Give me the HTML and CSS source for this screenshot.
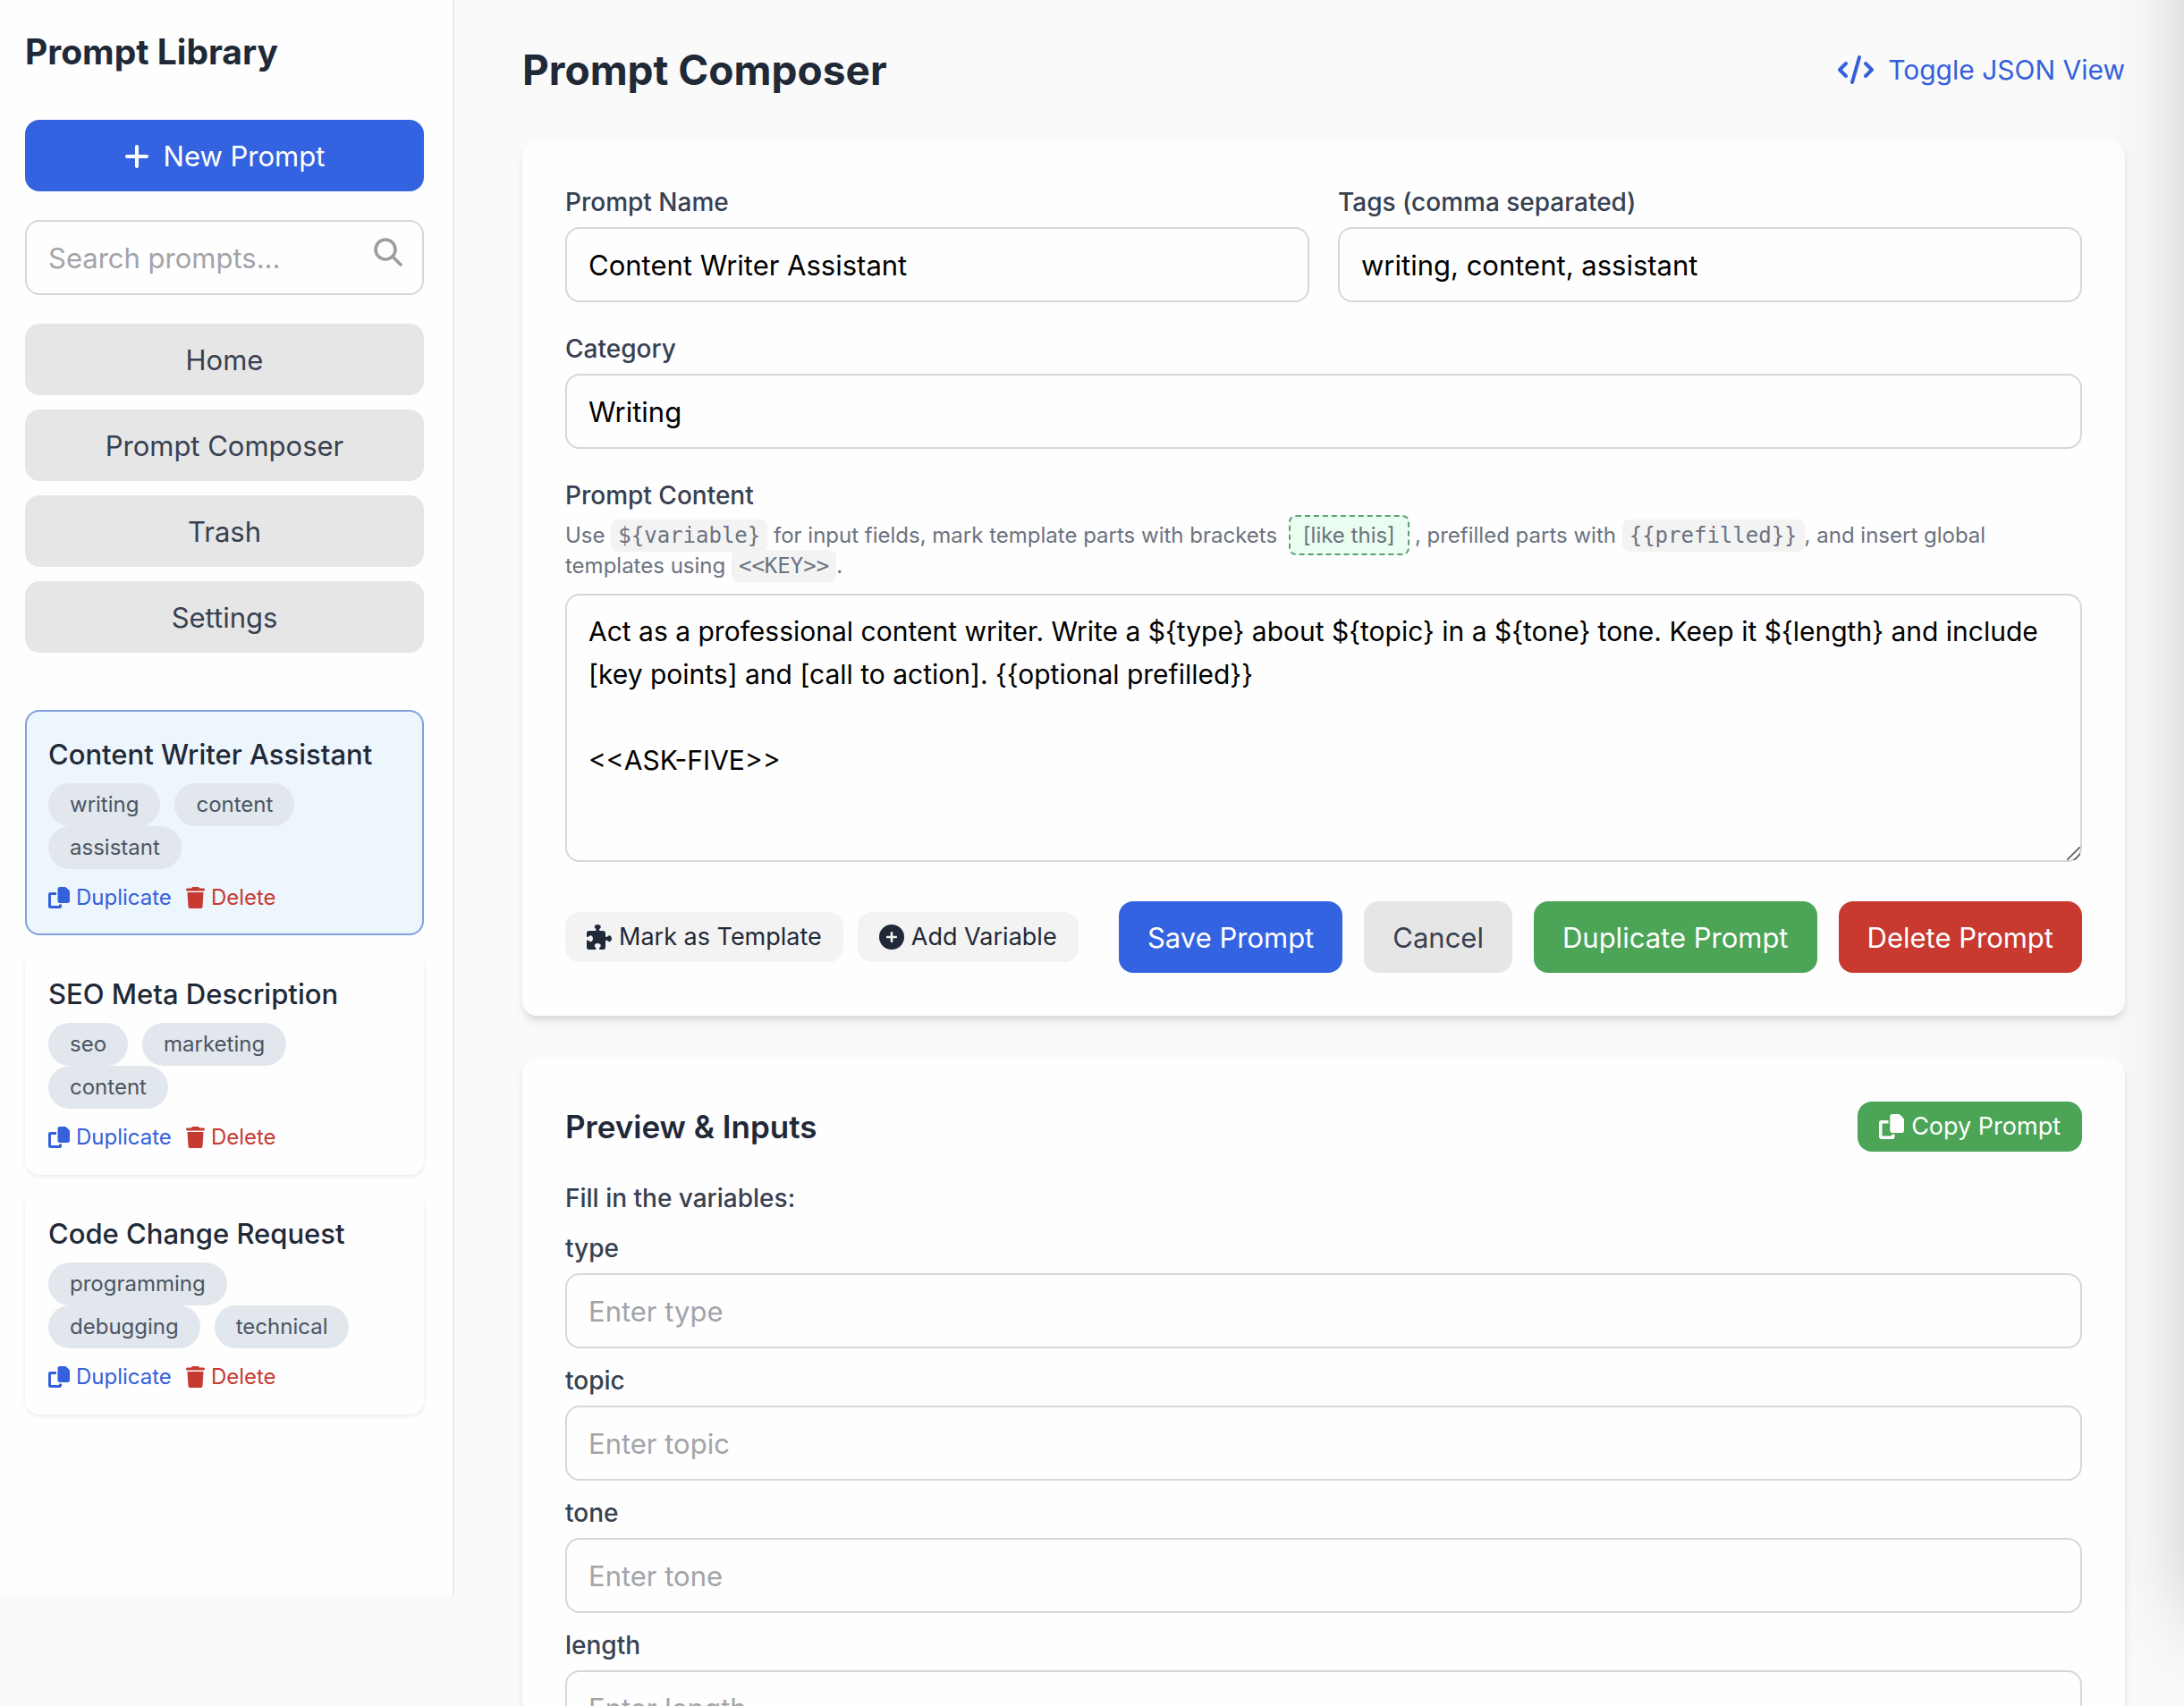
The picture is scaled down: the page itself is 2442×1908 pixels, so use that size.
FILE: index.html
```html
<!DOCTYPE html>
<html lang="en">
<head>
<meta charset="utf-8">
<title>Prompt Composer</title>
<link rel="stylesheet" href="styles.css">
</head>
<body>
<svg class="sprite" aria-hidden="true">
  <symbol id="i-plus" viewBox="0 0 448 512"><path d="M256 80c0-17.7-14.3-32-32-32s-32 14.3-32 32V224H48c-17.7 0-32 14.3-32 32s14.3 32 32 32H192V432c0 17.7 14.3 32 32 32s32-14.3 32-32V288H400c17.7 0 32-14.3 32-32s-14.3-32-32-32H256V80z"/></symbol>
  <symbol id="i-search" viewBox="0 0 32 32"><path d="M13 2a11 11 0 1 0 0 22a11 11 0 1 0 0-22zM21 21L30 30" fill="none" stroke="currentColor" stroke-width="3.600" stroke-linecap="round"/></symbol>
  <symbol id="i-copy" viewBox="0 0 512 512"><path d="M272 0H396.1c12.7 0 24.9 5.1 33.9 14.1l67.9 67.9c9 9 14.1 21.2 14.1 33.9V336c0 26.5-21.5 48-48 48H272c-26.5 0-48-21.5-48-48V48c0-26.5 21.5-48 48-48zM48 128H192v64H64V448H256V416h64v48c0 26.5-21.5 48-48 48H48c-26.5 0-48-21.5-48-48V176c0-26.5 21.5-48 48-48z"/></symbol>
  <symbol id="i-trash" viewBox="0 0 448 512"><path d="M135.2 17.7L128 32H32C14.3 32 0 46.3 0 64S14.3 96 32 96H416c17.7 0 32-14.3 32-32s-14.3-32-32-32H320l-7.2-14.3C307.4 6.8 296.3 0 284.2 0H163.8c-12.1 0-23.2 6.8-28.6 17.7zM416 128H32L53.2 467c1.6 25.3 22.6 45 47.9 45H346.9c25.3 0 46.3-19.7 47.9-45L416 128z"/></symbol>
  <symbol id="i-code" viewBox="0 0 640 512"><path d="M392.8 1.2c-17-4.9-34.7 5-39.6 22l-128 448c-4.9 17 5 34.7 22 39.6s34.7-5 39.6-22l128-448c4.9-17-5-34.7-22-39.6zm80.6 120.1c-12.5 12.5-12.5 32.8 0 45.3L562.7 256l-89.4 89.4c-12.5 12.5-12.5 32.8 0 45.3s32.8 12.5 45.3 0l112-112c12.5-12.5 12.5-32.8 0-45.3l-112-112c-12.5-12.5-32.8-12.5-45.3 0zm-306.7 0c-12.5-12.5-32.8-12.5-45.3 0l-112 112c-12.5 12.5-12.5 32.8 0 45.3l112 112c12.5 12.5 32.8 12.5 45.3 0s12.5-32.8 0-45.3L77.3 256l89.4-89.4c12.5-12.5 12.5-32.8 0-45.3z"/></symbol>
  <symbol id="i-circle-plus" viewBox="0 0 512 512"><path d="M256 512A256 256 0 1 0 256 0a256 256 0 1 0 0 512zM232 344V280H168c-13.3 0-24-10.7-24-24s10.7-24 24-24h64V168c0-13.3 10.7-24 24-24s24 10.7 24 24v64h64c13.3 0 24 10.7 24 24s-10.7 24-24 24H280v64c0 13.3-10.7 24-24 24s-24-10.7-24-24z"/></symbol>
  <symbol id="i-puzzle" viewBox="0 0 512 512"><path d="M192 104.8c0-9.2-5.8-17.3-13.2-22.8C167.2 73.3 160 61.3 160 48c0-26.5 28.7-48 64-48s64 21.5 64 48c0 13.3-7.2 25.3-18.8 34c-7.4 5.5-13.2 13.6-13.2 22.8c0 12.8 10.4 23.2 23.2 23.2H336c26.5 0 48 21.5 48 48v56.8c0 12.8 10.4 23.2 23.2 23.2c9.2 0 17.3-5.8 22.8-13.2c8.7-11.6 20.7-18.8 34-18.8c26.5 0 48 28.7 48 64s-21.5 64-48 64c-13.3 0-25.3-7.2-34-18.8c-5.5-7.4-13.6-13.2-22.8-13.2c-12.8 0-23.2 10.4-23.2 23.2V464c0 26.5-21.5 48-48 48H279.2c-12.8 0-23.2-10.4-23.2-23.2c0-9.2 5.8-17.3 13.2-22.8c11.6-8.7 18.8-20.7 18.8-34c0-26.5-28.7-48-64-48s-64 21.5-64 48c0 13.3 7.2 25.3 18.8 34c7.4 5.5 13.2 13.6 13.2 22.8c0 12.8-10.4 23.2-23.2 23.2H48c-26.5 0-48-21.5-48-48V343.2C0 330.4 10.4 320 23.2 320c9.2 0 17.3 5.8 22.8 13.2C54.7 344.8 66.7 352 80 352c26.5 0 48-28.7 48-64s-21.5-64-48-64c-13.3 0-25.3 7.2-34 18.8C40.5 250.2 32.4 256 23.2 256C10.4 256 0 245.6 0 232.8V176c0-26.5 21.5-48 48-48H168.8c12.8 0 23.2-10.4 23.2-23.2z"/></symbol>
</svg>

<div class="layout">
  <aside class="sidebar">
    <h2 class="sidebar-title">Prompt Library</h2>
    <button type="button" class="btn btn-primary btn-new"><svg class="icon icon-plus"><use href="#i-plus"/></svg>New Prompt</button>
    <div class="search">
      <input type="text" class="field" placeholder="Search prompts..." aria-label="Search prompts">
      <svg class="icon icon-search"><use href="#i-search"/></svg>
    </div>
    <nav class="nav">
      <button type="button" class="btn btn-gray">Home</button>
      <button type="button" class="btn btn-gray">Prompt Composer</button>
      <button type="button" class="btn btn-gray">Trash</button>
      <button type="button" class="btn btn-gray">Settings</button>
    </nav>
    <div class="prompt-list">
      <article class="prompt-item active">
        <h3 class="prompt-name">Content Writer Assistant</h3>
        <div class="tags"><span class="tag">writing</span><span class="tag">content</span><span class="tag">assistant</span></div>
        <div class="item-actions">
          <button type="button" class="link-btn blue"><svg class="icon icon-copy"><use href="#i-copy"/></svg>Duplicate</button>
          <button type="button" class="link-btn red"><svg class="icon icon-trash"><use href="#i-trash"/></svg>Delete</button>
        </div>
      </article>
      <article class="prompt-item">
        <h3 class="prompt-name">SEO Meta Description</h3>
        <div class="tags"><span class="tag">seo</span><span class="tag">marketing</span><span class="tag">content</span></div>
        <div class="item-actions">
          <button type="button" class="link-btn blue"><svg class="icon icon-copy"><use href="#i-copy"/></svg>Duplicate</button>
          <button type="button" class="link-btn red"><svg class="icon icon-trash"><use href="#i-trash"/></svg>Delete</button>
        </div>
      </article>
      <article class="prompt-item">
        <h3 class="prompt-name">Code Change Request</h3>
        <div class="tags"><span class="tag">programming</span><span class="tag">debugging</span><span class="tag">technical</span></div>
        <div class="item-actions">
          <button type="button" class="link-btn blue"><svg class="icon icon-copy"><use href="#i-copy"/></svg>Duplicate</button>
          <button type="button" class="link-btn red"><svg class="icon icon-trash"><use href="#i-trash"/></svg>Delete</button>
        </div>
      </article>
    </div>
  </aside>

  <main class="main">
    <header class="page-header">
      <h1 class="page-title">Prompt Composer</h1>
      <button type="button" class="json-toggle"><svg class="icon icon-code"><use href="#i-code"/></svg>Toggle JSON View</button>
    </header>

    <form class="card composer">
      <div class="form-grid">
        <div class="form-group">
          <label class="label" for="name">Prompt Name</label>
          <input class="field" id="name" type="text" value="Content Writer Assistant">
        </div>
        <div class="form-group">
          <label class="label" for="tags">Tags (comma separated)</label>
          <input class="field" id="tags" type="text" value="writing, content, assistant">
        </div>
      </div>
      <div class="form-group">
        <label class="label" for="category">Category</label>
        <input class="field" id="category" type="text" value="Writing">
      </div>
      <div class="content-group">
        <label class="label" for="content">Prompt Content</label>
        <p class="help">Use <code class="chip">${variable}</code> for input fields, mark template parts with brackets <span class="template-part">[like this]</span>, prefilled parts with <code class="chip">{{prefilled}}</code>, and insert global templates using <code class="chip">&lt;&lt;KEY&gt;&gt;</code>.</p>
        <textarea class="field content-area" id="content">Act as a professional content writer. Write a ${type} about ${topic} in a ${tone} tone. Keep it ${length} and include [key points] and [call to action]. {{optional prefilled}}

&lt;&lt;ASK-FIVE&gt;&gt;</textarea>
      </div>
      <div class="toolbar">
        <div class="tools">
          <button type="button" class="btn-small btn-light"><svg class="icon icon-small"><use href="#i-puzzle"/></svg>Mark as Template</button>
          <button type="button" class="btn-small btn-light"><svg class="icon icon-small"><use href="#i-circle-plus"/></svg>Add Variable</button>
        </div>
        <div class="actions">
          <button type="button" class="btn btn-primary">Save Prompt</button>
          <button type="button" class="btn btn-gray">Cancel</button>
          <button type="button" class="btn btn-green">Duplicate Prompt</button>
          <button type="button" class="btn btn-red">Delete Prompt</button>
        </div>
      </div>
    </form>

    <section class="card preview">
      <div class="preview-header">
        <h2 class="preview-title">Preview &amp; Inputs</h2>
        <button type="button" class="btn-small btn-green"><svg class="icon icon-small"><use href="#i-copy"/></svg>Copy Prompt</button>
      </div>
      <h3 class="label preview-hint">Fill in the variables:</h3>
      <div class="variables">
        <div class="form-group"><label class="label" for="v-type">type</label><input class="field" id="v-type" type="text" placeholder="Enter type"></div>
        <div class="form-group"><label class="label" for="v-topic">topic</label><input class="field" id="v-topic" type="text" placeholder="Enter topic"></div>
        <div class="form-group"><label class="label" for="v-tone">tone</label><input class="field" id="v-tone" type="text" placeholder="Enter tone"></div>
        <div class="form-group"><label class="label" for="v-length">length</label><input class="field" id="v-length" type="text" placeholder="Enter length"></div>
      </div>
    </section>
  </main>
</div>
<div class="drawer" aria-hidden="true"></div>
</body>
</html>
```
FILE: styles.css
```css
* { box-sizing: border-box; margin: 0; }

body {
  height: 100vh;
  overflow: hidden;
  background: #fafafa;
  color: #1f2937;
  font-family: Inter, "Liberation Sans", sans-serif;
  font-size: 31px;
  line-height: 48px;
}

button, input, textarea { font: inherit; color: inherit; }
button { border: 0; padding: 0; background: none; cursor: pointer; white-space: nowrap; }

.sprite { display: none; }
.icon { flex: none; fill: currentColor; }
.icon-plus { width: 28px; height: 32px; }
.icon-code { width: 40px; height: 32px; }
.icon-copy { width: 24px; height: 24px; }
.icon-trash { width: 21px; height: 24px; }
.icon-small { width: 28px; height: 28px; }

.layout { display: flex; align-items: flex-start; }

/* Sidebar */
.sidebar {
  flex: none;
  width: 508px;
  min-height: calc(100vh - 124px);
  padding: 30px 32px 32px 28px;
  background: #fefefe;
  border-right: 2px solid #e9e9ea;
}
.sidebar-title { margin-bottom: 48px; font-size: 39px; line-height: 56px; font-weight: 700; }
.search { position: relative; margin: 32px 0; }
.icon-search { position: absolute; right: 24px; top: 20px; width: 32px; height: 32px; color: #9b9da1; }
.nav { display: flex; flex-direction: column; gap: 16px; margin-bottom: 64px; }
.prompt-list { display: flex; flex-direction: column; gap: 16px; }
.prompt-item {
  padding: 24px;
  border: 2px solid transparent;
  border-radius: 16px;
  background: #fefefe;
  box-shadow: 0 2px 4px rgba(0, 0, 0, 0.08);
}
.prompt-item.active { background: #edf5fd; border-color: #7f9fdd; box-shadow: none; }
.prompt-name { margin-bottom: 8px; font-size: 31px; line-height: 48px; font-weight: 500; }
.tags { display: flex; flex-wrap: wrap; }
.tag {
  margin-right: 16px;
  padding: 8px 24px;
  border-radius: 24px;
  background: #e1e7ec;
  color: #4b5563;
  font-size: 24px;
  line-height: 32px;
}
.item-actions { display: flex; gap: 16px; margin-top: 16px; }
.link-btn { display: flex; align-items: center; gap: 7px; font-size: 24px; line-height: 32px; }
.blue { color: #3460dc; }
.red { color: #c63a31; }

/* Buttons */
.btn {
  display: flex;
  align-items: center;
  justify-content: center;
  gap: 16px;
  padding: 17px 32px 15px;
  border-radius: 16px;
}
.btn-new { width: 100%; }
.btn-primary { background: #3463e1; color: #fff; }
.btn-gray { background: #e6e6e7; color: #374151; }
.btn-green { background: #4ca456; color: #fff; }
.btn-red { background: #c8392f; color: #fff; }
.btn-small {
  display: flex;
  align-items: center;
  gap: 8px;
  padding: 8px 24px;
  border-radius: 16px;
  font-size: 27px;
  line-height: 40px;
}
.btn-light { background: #f3f3f4; color: #1f2937; }

/* Main column */
.main { flex: 1; min-width: 0; padding: 46px 66px 48px 76px; }
.page-header { display: flex; align-items: center; justify-content: space-between; margin-bottom: 48px; }
.page-title { font-size: 46px; line-height: 64px; font-weight: 700; }
.json-toggle { display: flex; align-items: center; gap: 16px; color: #3460dc; font-size: 30px; }

.card {
  margin-bottom: 48px;
  padding: 48px;
  border-radius: 16px;
  background: #fefefe;
  box-shadow: 0 8px 12px -2px rgba(0, 0, 0, 0.1), 0 4px 8px -4px rgba(0, 0, 0, 0.1);
}
.composer { display: flex; flex-direction: column; gap: 32px; }
.form-grid { display: grid; grid-template-columns: 1fr 1fr; gap: 32px; }
.form-group { display: flex; flex-direction: column; gap: 8px; }
.label { display: block; color: #374151; font-size: 28px; line-height: 40px; font-weight: 500; }
.field {
  display: block;
  width: 100%;
  padding: 16px 24px;
  border: 2px solid #d6d7d9;
  border-radius: 16px;
  background: #fefefe;
  color: #000;
  font-size: 31px;
  line-height: 48px;
  outline: none;
}
input.field { height: 84px; }
.field::placeholder { color: #a2a4a9; opacity: 1; }
.content-area { height: 300px; font-size: 30px; resize: vertical; }
.content-area::-webkit-resizer {
  background:
    linear-gradient(135deg,
      transparent 46%, #77797d 46%, #77797d 54%, transparent 54%,
      transparent 73%, #77797d 73%, #77797d 81%, transparent 81%);
}

.help { margin: 8px 0 14px; color: #6b7280; font-size: 24px; line-height: 33px; }
.chip {
  padding: 4px 8px;
  border-radius: 8px;
  background: #f3f3f4;
  font-family: "DejaVu Sans Mono", monospace;
  font-size: 24px;
}
.template-part {
  margin: 0 6px;
  padding: 6px 14px;
  border: 2px dashed #5f9f75;
  border-radius: 8px;
  background: #e9fdf0;
}

.toolbar { display: flex; align-items: center; justify-content: space-between; gap: 24px; margin-top: 12px; }
.tools { display: flex; gap: 16px; }
.actions { display: flex; gap: 24px; }

.preview-header { display: flex; align-items: center; justify-content: space-between; }
.preview-title { font-size: 35px; line-height: 56px; font-weight: 600; }
.preview-hint { margin: 32px 0 16px; }
.variables { display: flex; flex-direction: column; gap: 16px; }

/* Drawer parked past the right edge; only its shadow shows */
.drawer {
  position: fixed;
  left: 100%;
  top: -200px;
  bottom: 124px;
  width: 768px;
  box-shadow: 0 50px 100px -24px rgba(0, 0, 0, 0.3);
}
```
